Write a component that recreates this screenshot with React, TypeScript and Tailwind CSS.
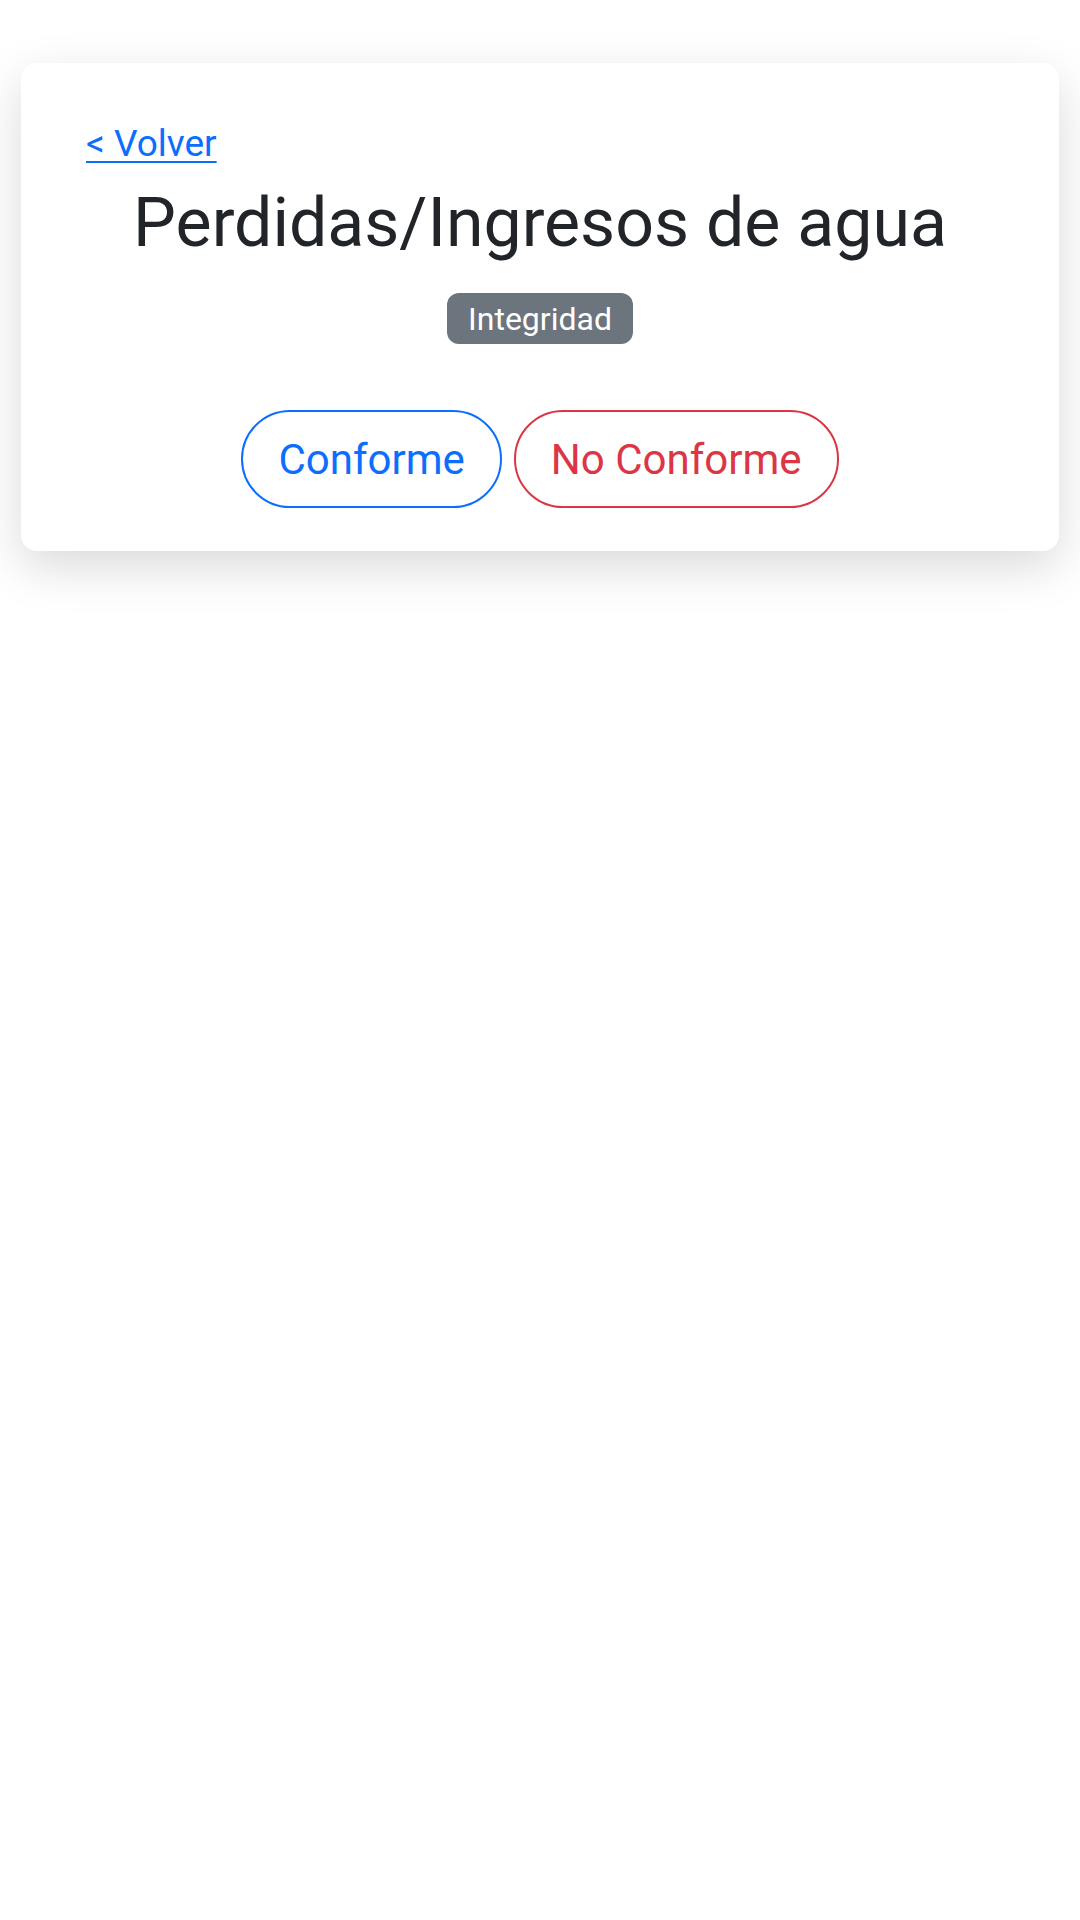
import React from 'react';

const font = { fontFamily: 'Roboto, "Noto Sans", sans-serif' };

const App: React.FC = () => {
  return (
    <div className="min-h-[1920px] w-[1080px] bg-white" style={font}>
      <div className="px-[21px] pt-[63px]">
        <div className="rounded-2xl bg-white px-[65px] pt-[55px] pb-[43px] shadow-[0_16px_48px_rgba(0,0,0,0.15)]">
          <a href="#" className="block text-[37px] leading-[51px] text-[#0d6efd] underline underline-offset-[5px] decoration-2">
            &lt; Volver
          </a>
          <h1 className="mt-[14px] text-center text-[68px] leading-[80px] font-normal text-[#212529]">
            Perdidas/Ingresos de agua
          </h1>
          <div className="mt-[30px] flex justify-center">
            <span className="rounded-xl bg-[#6c757d] px-[21px] h-[51px] flex items-center text-[32px] text-white">
              Integridad
            </span>
          </div>
          <div className="mt-[66px] flex justify-center gap-[12px]">
            <button className="h-[98px] rounded-full border-[2.5px] border-[#0d6efd] px-[35px] text-[42px] text-[#0d6efd]">
              Conforme
            </button>
            <button className="h-[98px] rounded-full border-[2.5px] border-[#dc3545] px-[35px] text-[42px] text-[#dc3545]">
              No Conforme
            </button>
          </div>
        </div>
      </div>
    </div>
  );
};

export default App;
